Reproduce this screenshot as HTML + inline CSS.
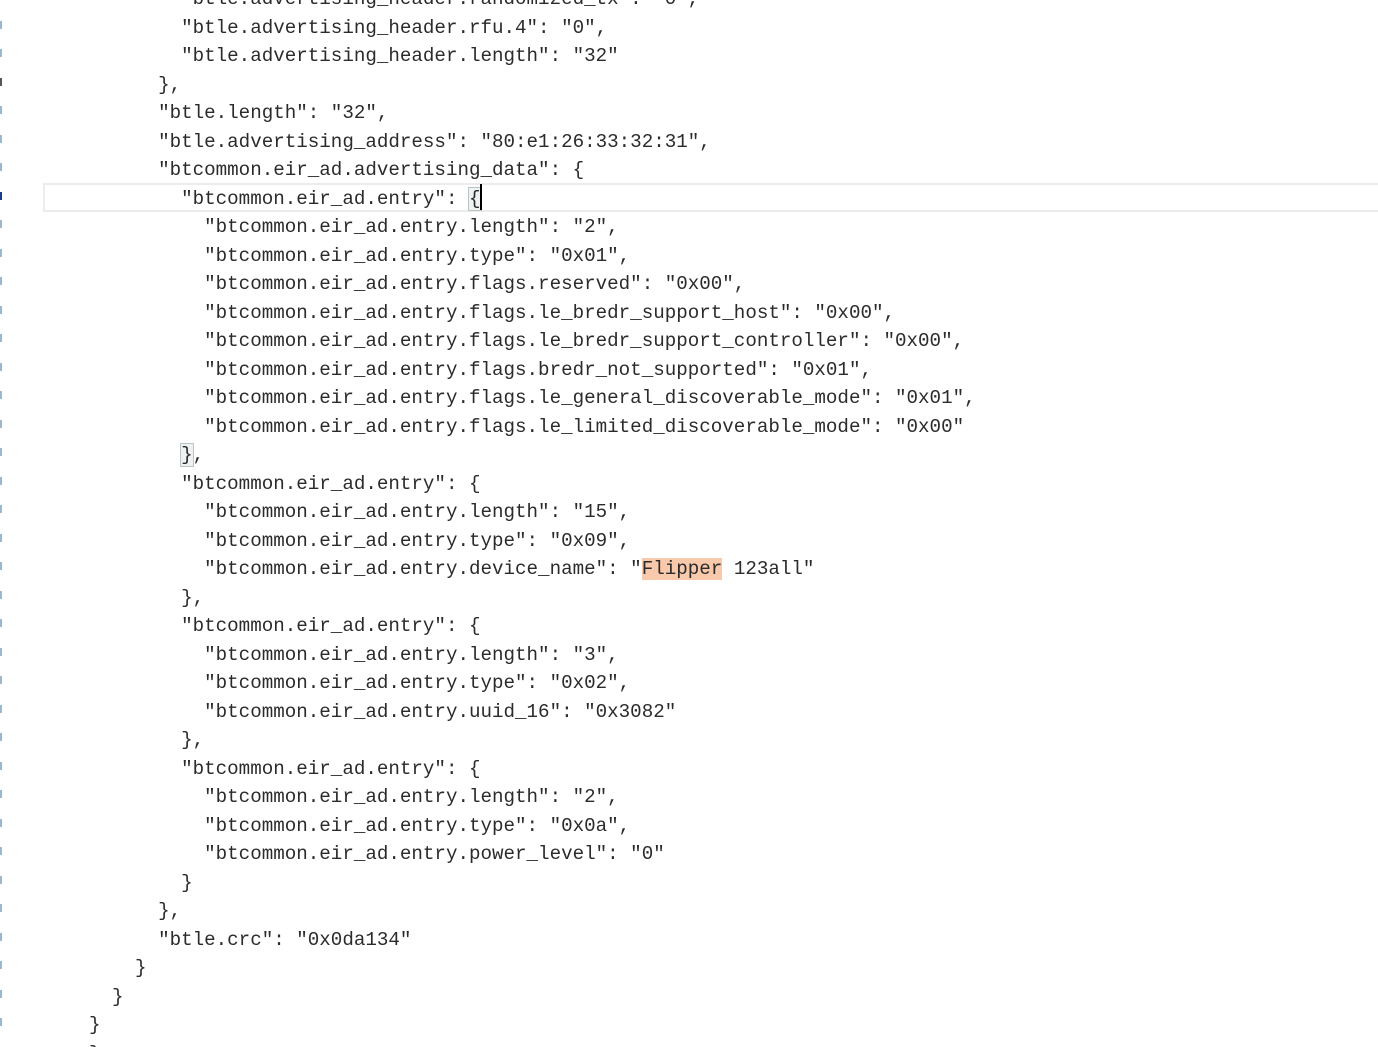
<!DOCTYPE html>
<html><head><meta charset="utf-8"><style>
html,body{margin:0;padding:0;background:#fff;width:1378px;height:1047px;overflow:hidden;position:relative}
.code{position:absolute;left:89px;top:-14.75px;font-family:"Liberation Mono",monospace;font-size:19.2px;line-height:28.5px;color:#2b2b2b;white-space:pre}
.cur{position:absolute;left:43px;top:183px;width:1340px;height:25px;border:2px solid #ececec;border-right:none}
.hl{background:#f8c9ab}
.bm{outline:1px solid #b9c4c4;background:#eef2f2}
.caret{position:absolute;left:480px;top:184px;width:2px;height:26px;background:#000}
.ln{position:absolute;left:0;width:2px;height:8px;background:#9ab8cf}
</style></head><body>
<div class="cur"></div>
<div class="code">        "btle.advertising_header.randomized_tx": "0",
        "btle.advertising_header.rfu.4": "0",
        "btle.advertising_header.length": "32"
      },
      "btle.length": "32",
      "btle.advertising_address": "80:e1:26:33:32:31",
      "btcommon.eir_ad.advertising_data": {
        "btcommon.eir_ad.entry": <span class="bm">{</span>
          "btcommon.eir_ad.entry.length": "2",
          "btcommon.eir_ad.entry.type": "0x01",
          "btcommon.eir_ad.entry.flags.reserved": "0x00",
          "btcommon.eir_ad.entry.flags.le_bredr_support_host": "0x00",
          "btcommon.eir_ad.entry.flags.le_bredr_support_controller": "0x00",
          "btcommon.eir_ad.entry.flags.bredr_not_supported": "0x01",
          "btcommon.eir_ad.entry.flags.le_general_discoverable_mode": "0x01",
          "btcommon.eir_ad.entry.flags.le_limited_discoverable_mode": "0x00"
        <span class="bm">}</span>,
        "btcommon.eir_ad.entry": {
          "btcommon.eir_ad.entry.length": "15",
          "btcommon.eir_ad.entry.type": "0x09",
          "btcommon.eir_ad.entry.device_name": "<span class="hl">Flipper</span> 123all"
        },
        "btcommon.eir_ad.entry": {
          "btcommon.eir_ad.entry.length": "3",
          "btcommon.eir_ad.entry.type": "0x02",
          "btcommon.eir_ad.entry.uuid_16": "0x3082"
        },
        "btcommon.eir_ad.entry": {
          "btcommon.eir_ad.entry.length": "2",
          "btcommon.eir_ad.entry.type": "0x0a",
          "btcommon.eir_ad.entry.power_level": "0"
        }
      },
      "btle.crc": "0x0da134"
    }
  }
}
},</div>
<div class="caret"></div>
<div class="ln" style="top:21px"></div><div class="ln" style="top:49px"></div><div class="ln" style="top:78px;background:#555"></div><div class="ln" style="top:106px"></div><div class="ln" style="top:135px"></div><div class="ln" style="top:163px"></div><div class="ln" style="top:192px;background:#1a3a8a"></div><div class="ln" style="top:220px"></div><div class="ln" style="top:249px"></div><div class="ln" style="top:277px"></div><div class="ln" style="top:306px"></div><div class="ln" style="top:334px"></div><div class="ln" style="top:363px"></div><div class="ln" style="top:391px"></div><div class="ln" style="top:420px"></div><div class="ln" style="top:448px"></div><div class="ln" style="top:477px"></div><div class="ln" style="top:505px"></div><div class="ln" style="top:534px"></div><div class="ln" style="top:562px"></div><div class="ln" style="top:591px"></div><div class="ln" style="top:619px"></div><div class="ln" style="top:648px"></div><div class="ln" style="top:676px"></div><div class="ln" style="top:705px"></div><div class="ln" style="top:733px"></div><div class="ln" style="top:762px"></div><div class="ln" style="top:790px"></div><div class="ln" style="top:819px"></div><div class="ln" style="top:847px"></div><div class="ln" style="top:876px"></div><div class="ln" style="top:904px"></div><div class="ln" style="top:933px"></div><div class="ln" style="top:961px"></div><div class="ln" style="top:990px"></div><div class="ln" style="top:1018px"></div>
</body></html>
